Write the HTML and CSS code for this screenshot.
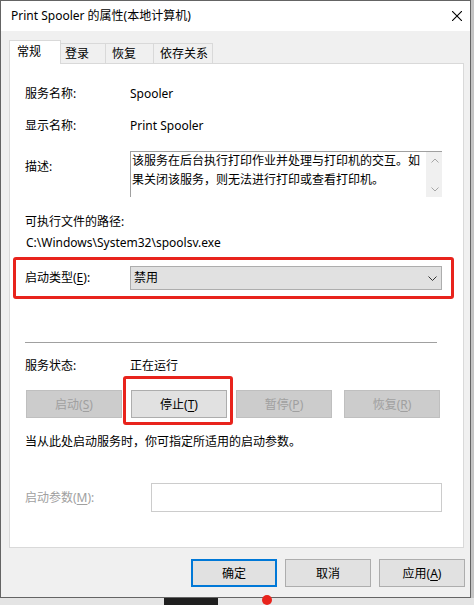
FILE: index.html
```html
<!DOCTYPE html>
<html lang="zh-CN">
<head>
    <meta charset="UTF-8">
    <meta name="viewport" content="width=device-width, initial-scale=1.0">
    <title>Print Spooler 的属性(本地计算机)</title>
    <link rel="stylesheet" href="styles.css">
</head>
<body>

<div class="screen">
    <div class="window">
        <div class="titlebar">
            <span class="title">Print Spooler 的属性(本地计算机)</span>
            <svg class="caption-x" width="10" height="10" viewBox="0 0 10 10">
                <path d="M0 0 L10 10 M10 0 L0 10" stroke="#000" stroke-width="1.1" fill="none"/>
            </svg>
        </div>

        <div class="dialog">
            <div class="tabs">
                <div class="tab active">常规</div>
                <div class="tab tab-login">登录</div>
                <div class="tab tab-recover">恢复</div>
                <div class="tab tab-deps">依存关系</div>
            </div>

            <div class="panel">
                <div class="row">
                    <span class="label">服务名称:</span>
                    <span>Spooler</span>
                </div>
                <div class="row row-display">
                    <span class="label">显示名称:</span>
                    <span>Print Spooler</span>
                </div>
                <div class="row row-desc">
                    <span class="label">描述:</span>
                    <div class="textbox">
                        <div class="textbox-text">该服务在后台执行打印作业并处理与打印机的交互。如果关闭该服务，则无法进行打印或查看打印机。</div>
                        <div class="scrollbar">
                            <svg width="8" height="5" viewBox="0 0 8 5"><path d="M0.5 4.5 L4 1 L7.5 4.5" stroke="#a6a6a6" fill="none"/></svg>
                            <svg width="8" height="5" viewBox="0 0 8 5"><path d="M0.5 0.5 L4 4 L7.5 0.5" stroke="#a6a6a6" fill="none"/></svg>
                        </div>
                    </div>
                </div>
                <div class="row row-path-label">可执行文件的路径:</div>
                <div class="row row-path">C:\Windows\System32\spoolsv.exe</div>

                <div class="row row-startup highlight">
                    <span class="label">启动类型(<u>E</u>):</span>
                    <div class="select">
                        <span>禁用</span>
                        <svg width="9" height="5" viewBox="0 0 9 5"><path d="M0.5 0.5 L4.5 4.5 L8.5 0.5" stroke="#333" fill="none"/></svg>
                    </div>
                </div>

                <div class="separator"></div>

                <div class="row row-status">
                    <span class="label">服务状态:</span>
                    <span>正在运行</span>
                </div>

                <div class="buttons">
                    <button class="btn" disabled>启动(<u>S</u>)</button>
                    <button class="btn highlight">停止(<u>T</u>)</button>
                    <button class="btn" disabled>暂停(<u>P</u>)</button>
                    <button class="btn" disabled>恢复(<u>R</u>)</button>
                </div>

                <div class="row row-hint">当从此处启动服务时，你可指定所适用的启动参数。</div>

                <div class="row row-params">
                    <span class="label label-params">启动参数(<u>M</u>):</span>
                    <div class="input"></div>
                </div>
            </div>

            <div class="actions">
                <button class="btn btn-default">确定</button>
                <button class="btn">取消</button>
                <button class="btn">应用(<u>A</u>)</button>
            </div>
        </div>
    </div>
    <div class="side"></div>
</div>
<div class="desktop">
    <div class="desktop-block"></div>
    <div class="desktop-dot"></div>
</div>

</body>
</html>
```

FILE: styles.css
```css
* {
    box-sizing: border-box;
}
body {
    margin: 0;
    width: 474px;
    height: 605px;
    overflow: hidden;
    background-color: #d6d6d6;
    font-family: "Noto Sans", "Noto Sans CJK SC", sans-serif;
    font-size: 12px;
    color: #000;
}
u {
    text-decoration-thickness: 1px;
    text-underline-offset: 2px;
}
.screen {
    display: flex;
}
.window {
    flex: none;
    width: 471px;
    height: 598px;
    border: 1px solid #646464;
    background: #f0f0f0;
    display: flex;
    flex-direction: column;
}
.side {
    flex: 1;
    background: #c4c4c4;
}
.titlebar {
    height: 30px;
    background: #fff;
    display: flex;
    align-items: center;
    justify-content: space-between;
    padding: 0 8px 0 10px;
}
.title {
    line-height: 30px;
}
.caption-x {
    display: block;
    flex: none;
}
.dialog {
    padding-top: 9px;
}
.tabs {
    display: flex;
    align-items: flex-end;
    margin-left: 8px;
}
.tab {
    height: 20px;
    line-height: 19px;
    border-top: 1px solid #d9d9d9;
    border-right: 1px solid #d9d9d9;
    background: #f0f0f0;
    padding-left: 4px;
}
.tab.active {
    position: relative;
    z-index: 1;
    width: 52px;
    height: 24px;
    margin-bottom: -1px;
    border-left: 1px solid #d9d9d9;
    background: #fff;
    padding: 1px 0 0 7px;
    line-height: 20px;
}
.tab-login {
    width: 45px;
}
.tab-recover {
    width: 48px;
    padding-left: 6px;
}
.tab-deps {
    width: 59px;
    padding-left: 6px;
}
.panel {
    margin-left: 8px;
    width: 455px;
    height: 485px;
    border: 1px solid #d9d9d9;
    background: #fff;
    padding: 20px 20px 0 15px;
}
.row {
    display: flex;
    align-items: center;
    height: 20px;
    line-height: 20px;
}
.label {
    flex: none;
    width: 105px;
}
.row-display {
    margin-top: 12px;
}
.row-desc {
    margin-top: 15px;
    height: 46px;
    align-items: flex-start;
}
.row-desc .label {
    padding-top: 6px;
}
.textbox {
    display: flex;
    width: 312px;
    height: 46px;
    border-top: 1px solid #a0a0a0;
    border-left: 1px solid #a0a0a0;
}
.textbox-text {
    flex: 1;
    padding-left: 1px;
    margin-top: -1px;
    line-height: 19px;
}
.scrollbar {
    width: 16px;
    background: #f0f0f0;
    display: flex;
    flex-direction: column;
    justify-content: space-between;
    align-items: center;
    padding: 6px 0 5px 1px;
}
.row-path-label {
    margin-top: 15px;
}
.row-path {
    margin-top: 1px;
    padding-left: 1px;
}
.row-startup {
    margin-top: 13px;
    height: 24px;
}
.select {
    width: 312px;
    height: 24px;
    background: #e1e1e1;
    border: 1px solid #adadad;
    display: flex;
    align-items: center;
    justify-content: space-between;
    padding: 0 4px 0 3px;
}
.highlight {
    position: relative;
}
.highlight::after {
    content: "";
    position: absolute;
    border: 3px solid #e8231c;
    border-radius: 3px;
}
.row-startup::after {
    top: -9px;
    bottom: -9px;
    left: -12px;
    right: -11px;
}
.separator {
    margin-top: 52px;
    width: 412px;
    height: 1px;
    background: #a0a0a0;
}
.row-status {
    margin-top: 13px;
}
.buttons {
    display: flex;
    gap: 9px;
    margin: 14px 0 0 1px;
}
.btn {
    width: 96px;
    height: 28px;
    padding: 0;
    border: 1px solid #adadad;
    background: #e1e1e1;
    font-family: inherit;
    font-size: 12px;
    color: #000;
}
.btn:disabled {
    background: #cccccc;
    border-color: #bfbfbf;
    color: #a0a0a0;
}
.buttons .btn:last-child {
    margin-left: 3px;
}
.buttons .highlight::after {
    top: -15px;
    bottom: -8px;
    left: -9px;
    right: -7px;
}
.row-hint {
    margin-top: 14px;
}
.row-params {
    margin-top: 31px;
    height: 29px;
}
.label-params {
    width: 126px;
    color: #a0a0a0;
}
.input {
    width: 291px;
    height: 29px;
    border: 1px solid #cccccc;
    background: #fff;
}
.actions {
    display: flex;
    justify-content: flex-end;
    gap: 8px;
    margin-top: 11px;
    padding-right: 5px;
}
.actions .btn {
    width: 86px;
}
.btn-default {
    border: 2px solid #0078d7;
}
.desktop {
    display: flex;
    height: 7px;
    background: #e4e4e4;
}
.desktop-block {
    margin-left: 164px;
    width: 54px;
    background: #1f1f1f;
}
.desktop-dot {
    margin-left: 44px;
    width: 10px;
    height: 10px;
    border-radius: 50%;
    background: #e8231c;
    margin-top: -3px;
}
```
